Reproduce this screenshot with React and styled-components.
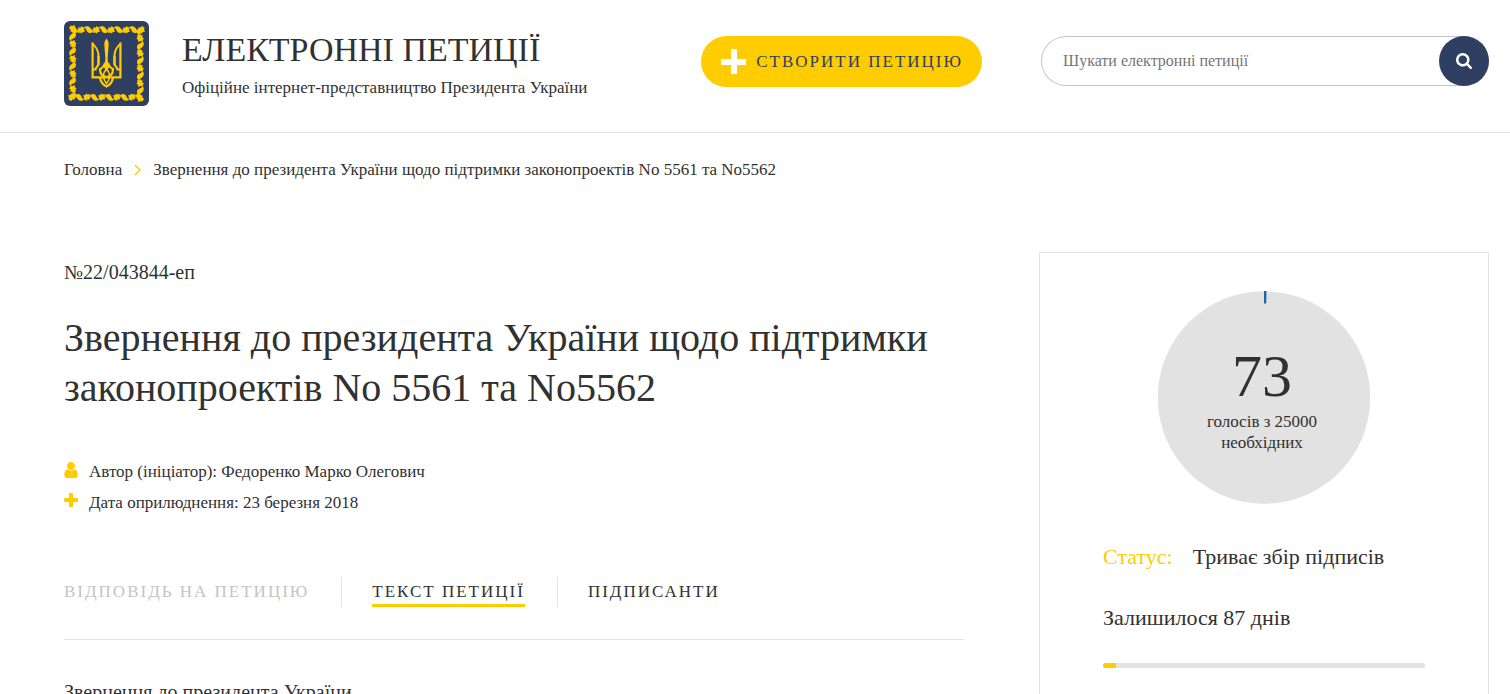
import React from "react"
import styled, { createGlobalStyle, ThemeProvider } from "styled-components"

const theme = {
  text: "#313131",
  yellow: "#ffcc00",
  navy: "#2f3f61",
  line: "#e2e2e2",
  muted: "#c4c4c4",
}

const GlobalStyle = createGlobalStyle`
  * {
    box-sizing: border-box;
  }
  body {
    margin: 0;
    height: 100vh;
    overflow: hidden;
    background: #fff;
    color: ${theme.text};
    font-family: "Liberation Serif", "Times New Roman", serif;
    font-size: 17px;
    line-height: 21px;
  }
  a {
    color: inherit;
    text-decoration: none;
  }
  h1, p {
    margin: 0;
    font-weight: normal;
  }
  button, input {
    font-family: inherit;
  }
`

const Header = styled.header`
  display: flex;
  align-items: flex-start;
  padding: 21px 21px 26px 64px;
  border-bottom: 1px solid ${props => props.theme.line};
`

const Brand = styled.a`
  display: flex;
  flex: 1;
  gap: 33px;
`

const BrandName = styled.div`
  padding-top: 8px;
  font-size: 34px;
  line-height: 42px;
`

const BrandNote = styled.div`
  padding-top: 6px;
`

const CreateButton = styled.button`
  display: flex;
  align-items: center;
  gap: 10px;
  height: 51px;
  margin: 15px 59px 0 0;
  padding: 0 19px 0 20px;
  border: 0;
  border-radius: 26px;
  background: ${props => props.theme.yellow};
  color: ${props => props.theme.navy};
  font-size: 17px;
  letter-spacing: 2px;
`

const SearchForm = styled.form`
  display: flex;
  width: 448px;
  height: 50px;
  margin-top: 15px;
  border-radius: 25px;
  box-shadow: inset 0 0 0 1px #c4c3d6;
`

const SearchInput = styled.input`
  flex: 1;
  min-width: 0;
  padding: 0 22px;
  border: 0;
  background: none;
  font-size: 16px;
  &::placeholder {
    color: #757575;
  }
`

const SearchButton = styled.button`
  display: flex;
  align-items: center;
  justify-content: center;
  width: 50px;
  padding: 0;
  border: 0;
  border-radius: 50%;
  background: ${props => props.theme.navy};
  color: #fff;
`

const Breadcrumbs = styled.nav`
  display: flex;
  align-items: center;
  gap: 12px;
  padding: 26px 64px 0;
`

const Columns = styled.main`
  display: flex;
  align-items: flex-start;
  gap: 75px;
  padding: 72px 21px 0 64px;
`

const Petition = styled.article`
  flex: 1;
  min-width: 0;
`

const Number = styled.p`
  padding-top: 8px;
  font-size: 20px;
  line-height: 24px;
`

const Title = styled.h1`
  padding: 29px 0 48px;
  font-size: 40px;
  line-height: 50px;
`

const MetaRow = styled.p`
  display: flex;
  gap: 11px;
  margin-bottom: 10px;
  svg {
    flex: none;
    margin-top: 1px;
  }
`

const Tabs = styled.nav`
  display: flex;
  margin-top: 64px;
  padding-bottom: 32px;
  border-bottom: 1px solid ${props => props.theme.line};
`

const TabCell = styled.div`
  padding: 0 32px 0 30px;
  border-left: 1px solid ${props => props.theme.line};
  &:first-child {
    padding-left: 0;
    border-left: 0;
  }
`

const Tab = styled.button`
  display: block;
  height: 30px;
  padding: 2px 0 0;
  border: 0;
  border-bottom: 3px solid ${props => (props.$active ? props.theme.yellow : "transparent")};
  background: none;
  color: ${props => (props.disabled ? props.theme.muted : props.theme.text)};
  font-size: 17px;
  letter-spacing: 2px;
`

const PetitionText = styled.p`
  padding-top: 40px;
  font-size: 20px;
  line-height: 24px;
`

const Card = styled.aside`
  width: 450px;
  min-height: 520px;
  padding: 38px 63px 0;
  border: 1px solid ${props => props.theme.line};
`

const Votes = styled.div`
  display: grid;
  width: 212px;
  margin: 0 auto 37px;
  > * {
    grid-area: 1 / 1;
  }
`

const VotesLabel = styled.div`
  padding: 51px 44px 0 40px;
  text-align: center;
`

const VotesCount = styled.div`
  font-size: 60px;
  line-height: 69px;
`

const CardLine = styled.p`
  display: flex;
  gap: 20px;
  margin-bottom: 29px;
  font-size: 22px;
  line-height: 32px;
`

const StatusName = styled.span`
  color: ${props => props.theme.yellow};
`

const Track = styled.div`
  height: 5px;
  border-radius: 3px;
  overflow: hidden;
  background: ${props => props.theme.line};
`

const Fill = styled.div`
  height: 100%;
  background: ${props => props.theme.yellow};
`

const LEAVES = [6, 21, 36, 51, 66]

const LeafRow = ({ turn }) => (
  <g transform={`rotate(${turn} 42.5 42.5)`}>
    {LEAVES.map(x => (
      <g key={x} transform={`translate(${x} 5)`}>
        <path d="M-1 1.200C.8-.2 3.500 0 5 1.500 6.300 2.800 6.500 4.200 8.200 5.400 6.500 7.400 3.800 7.500 2.500 6 1.500 4.800 1.300 2.700-1 1.200z" />
        <path d="M6.500 3.700l1.700-.5.2-2 2 .6L11.600 0l1.400 1.200L14.600 1.500l-.6 2.300 1.200 1.700-2.400.5-1 1.500-1.600-1-2.200.5.200-2z" />
      </g>
    ))}
  </g>
)

const Emblem = () => (
  <svg width="85" height="85" viewBox="0 0 85 85" aria-hidden="true">
    <rect width="85" height="85" rx="6" fill={theme.navy} />
    <g fill={theme.yellow}>
      {[0, 90, 180, 270].map(turn => (
        <LeafRow key={turn} turn={turn} />
      ))}
      <path d="M42.500 17.500c-1.900 2.300-2.300 4.300-2.100 7l.9 12c.1 4.500-.6 6-2.700 8.500l3.900 4.500L46.400 45c-2.100-2.500-2.800-4-2.700-8.500l.9-12c.2-2.700-.2-4.700-2.100-7z" />
      <path d="M27.500 20.800c5 3.700 8 8.700 8 14.200v9h-2V35c0-4-1.500-7.500-4-10z" />
      <path d="M57.500 20.800c-5 3.700-8 8.700-8 14.200v9h2V35c0-4 1.500-7.500 4-10z" />
    </g>
    <g fill="none" stroke={theme.yellow} strokeWidth="2.200">
      <path d="M28.600 21.500v34.800h27.800V21.500" />
      <path d="M34.500 35v8c0 2-3 3-3 5.500h-3" />
      <path d="M50.500 35v8c0 2 3 3 3 5.500h3" />
      <path d="M41 42c-1 3-3.500 5.500-5 6 0 4.500 2.500 7.500 6.500 8 4-.5 6.500-3.500 6.500-8-1.500-.5-4-3-5-6" />
      <path d="M36 56.500c.5 3.500 2.500 7 6.500 9 4-2 6-5.500 6.500-9" />
      <path d="M42.500 48c-4 4-4 10 0 14.500 4-4.500 4-10.500 0-14.500z" strokeWidth="1.600" />
    </g>
  </svg>
)

const CreatePlus = () => (
  <svg width="25" height="25" viewBox="0 0 25 25" fill="#fff" aria-hidden="true">
    <path d="M10 0h6v10h9v6h-9v9h-6v-9H0v-6h10z" />
  </svg>
)

const SearchIcon = () => (
  <svg width="16" height="16" viewBox="0 0 1664 1664" fill="currentColor" aria-hidden="true">
    <path
      transform="translate(0 1408) scale(1 -1)"
      d="M1152 704q0 185-131.500 316.500T704 1152 387.500 1020.500 256 704t131.500-316.500T704 256t316.500 131.500T1152 704zm512-832q0-52-38-90t-90-38q-54 0-90 38l-343 342q-179-124-399-124-143 0-273.500 55.500t-225 150-150 225T0 704t55.500 273.500 150 225 225 150T704 1408t273.500-55.500 225-150 150-225T1408 704q0-220-124-399l343-343q37-37 37-90z"
    />
  </svg>
)

const Chevron = () => (
  <svg width="7" height="12" viewBox="0 0 7 12" fill="none" stroke={theme.yellow} strokeWidth="1.500" aria-hidden="true">
    <path d="M1 1l5 5-5 5" />
  </svg>
)

const AuthorIcon = () => (
  <svg width="14" height="16" viewBox="0 0 1280 1536" fill={theme.yellow} aria-hidden="true">
    <path
      transform="translate(0 1408) scale(1 -1)"
      d="M1280 137q0-109-62.500-187T1067-128H213q-88 0-150.500 78T0 137q0 85 8.500 160.500t31.500 152 58.500 131 94 89T327 704q131-128 313-128t313 128q76 0 134.500-34.500t94-89 58.500-131 31.500-152 8.500-160.500zM1024 1024q0-159-112.500-271.500T640 640 368.500 752.500 256 1024t112.500 271.500T640 1408t271.500-112.500T1024 1024z"
    />
  </svg>
)

const DateIcon = () => (
  <svg width="14" height="14" viewBox="0 0 14 14" fill={theme.yellow} aria-hidden="true">
    <path d="M6 0h2a1 1 0 011 1v4h4a1 1 0 011 1v2a1 1 0 01-1 1H9v4a1 1 0 01-1 1H6a1 1 0 01-1-1V9H1a1 1 0 01-1-1V6a1 1 0 011-1h4V1a1 1 0 011-1z" />
  </svg>
)

const VotesChart = () => (
  <svg width="212" height="213" viewBox="0 0 212 213" aria-hidden="true">
    <circle cx="106" cy="106.500" r="106.250" fill={theme.line} />
    <path d="M106 0h2.500l-.3 12.500H106z" fill="#1c66ab" />
  </svg>
)

export default function App() {
  return (
    <ThemeProvider theme={theme}>
      <GlobalStyle />
      <Header>
        <Brand href="#">
          <Emblem />
          <div>
            <BrandName>ЕЛЕКТРОННІ ПЕТИЦІЇ</BrandName>
            <BrandNote>Офіційне інтернет-представництво Президента України</BrandNote>
          </div>
        </Brand>
        <CreateButton type="button">
          <CreatePlus />
          СТВОРИТИ ПЕТИЦІЮ
        </CreateButton>
        <SearchForm>
          <SearchInput type="text" aria-label="Шукати електронні петиції" placeholder="Шукати електронні петиції" />
          <SearchButton type="button" aria-label="Шукати">
            <SearchIcon />
          </SearchButton>
        </SearchForm>
      </Header>
      <Breadcrumbs>
        <a href="#">Головна</a>
        <Chevron />
        <span>Звернення до президента України щодо підтримки законопроектів No 5561 та No5562</span>
      </Breadcrumbs>
      <Columns>
        <Petition>
          <Number>№22/043844-еп</Number>
          <Title>Звернення до президента України щодо підтримки законопроектів No 5561 та No5562</Title>
          <MetaRow>
            <AuthorIcon />
            Автор (ініціатор): Федоренко Марко Олегович
          </MetaRow>
          <MetaRow>
            <DateIcon />
            Дата оприлюднення: 23 березня 2018
          </MetaRow>
          <Tabs>
            <TabCell>
              <Tab type="button" disabled>ВІДПОВІДЬ НА ПЕТИЦІЮ</Tab>
            </TabCell>
            <TabCell>
              <Tab type="button" $active>ТЕКСТ ПЕТИЦІЇ</Tab>
            </TabCell>
            <TabCell>
              <Tab type="button">ПІДПИСАНТИ</Tab>
            </TabCell>
          </Tabs>
          <PetitionText>Звернення до президента України</PetitionText>
        </Petition>
        <Card>
          <Votes>
            <VotesChart />
            <VotesLabel>
              <VotesCount>73</VotesCount>
              голосів з 25000 необхідних
            </VotesLabel>
          </Votes>
          <CardLine>
            <StatusName>Статус:</StatusName>
            <span>Триває збір підписів</span>
          </CardLine>
          <CardLine>Залишилося 87 днів</CardLine>
          <Track>
            <Fill style={{ width: `${(1 - 87 / 90) * 120}%` }} />
          </Track>
        </Card>
      </Columns>
    </ThemeProvider>
  )
}
